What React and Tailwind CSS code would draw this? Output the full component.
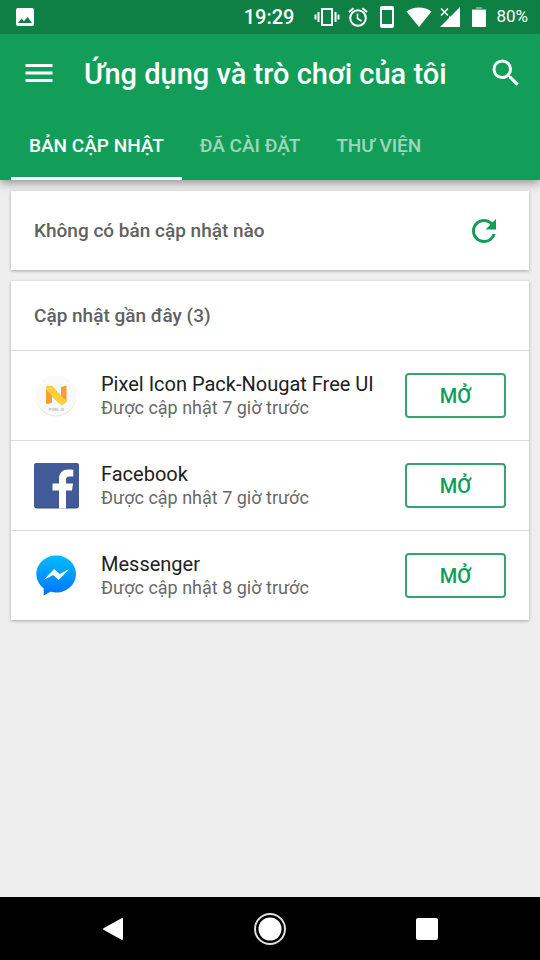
import React, { useState } from 'react';
import { MdMenu, MdSearch, MdRefresh } from 'react-icons/md';

const tabs = ['BẢN CẬP NHẬT', 'ĐÃ CÀI ĐẶT', 'THƯ VIỆN'];

const apps = [
  { name: 'Pixel Icon Pack-Nougat Free UI', updated: 'Được cập nhật 7 giờ trước', Icon: PixelIcon },
  { name: 'Facebook', updated: 'Được cập nhật 7 giờ trước', Icon: FacebookIcon },
  { name: 'Messenger', updated: 'Được cập nhật 8 giờ trước', Icon: MessengerIcon },
];

function PixelIcon() {
  return (
    <svg viewBox="0 0 46 46" className="size-[46px] shrink-0" aria-hidden="true">
      <circle cx="22" cy="23.3" r="20" fill="#d4d4d4" />
      <circle cx="22" cy="22.5" r="20.2" fill="#f9f9f9" />
      <path d="M12 13.500L18 13V30L12 31Z" fill="#f3a033" />
      <path d="M27 14L32.500 12.500V29L27 31Z" fill="#f3a033" />
      <path d="M12 13.500L18 12.500L32.500 28.500L28.500 32.500L12 16.500Z" fill="#fcd03a" />
      <path d="M12 16.500L28.500 32.500L24.500 30L18 23.500Z" fill="#f8bf34" />
      <text x="22.500" y="38" textAnchor="middle" fontFamily="Roboto, sans-serif" fontSize="4" fill="#9a9a9a">PIXEL UI</text>
    </svg>
  );
}

function FacebookIcon() {
  return (
    <svg viewBox="0 0 46 46" className="size-[46px] shrink-0" aria-hidden="true">
      <rect x="0" y="0" width="45" height="45.500" rx="3" fill="#324b81" />
      <rect x="0" y="0" width="45" height="44.500" rx="3" fill="#415b99" />
      <path d="M25 45.500V27.500H18.500V20.500H25V16C25 9.700 28.700 6.500 34.500 6.500C36.800 6.500 38.500 6.600 39.300 6.700V13.500H35.500C32.700 13.500 32 15 32 17V20.500H39L38 27.500H32V45.500Z" fill="#fff" />
    </svg>
  );
}

function MessengerIcon() {
  return (
    <svg viewBox="0 0 46 46" className="size-[46px] shrink-0" aria-hidden="true">
      <defs>
        <linearGradient id="messenger" x1="0" y1="0" x2="0" y2="1">
          <stop offset="0" stopColor="#00bdff" />
          <stop offset="1" stopColor="#0072ff" />
        </linearGradient>
      </defs>
      <path d="M22.200 2.500C11.200 2.500 2.400 10.700 2.400 21C2.400 26.800 5.200 31.900 9.700 35.300V42.500L16.700 38.700C18.500 39.200 20.300 39.500 22.200 39.500C33.200 39.500 42 31.300 42 21S33.200 2.500 22.200 2.500Z" fill="url(#messenger)" />
      <path d="M9.700 27L20.200 16L25.700 21L35.200 16L24.700 27L19.200 22Z" fill="#fff" />
    </svg>
  );
}

function StatusBar() {
  return (
    <div className="flex h-[34px] items-center bg-[#0f8044] pr-3 pl-4 text-white">
      <svg viewBox="0 0 18 18" className="size-[18px]" fill="currentColor" aria-label="Ảnh">
        <path fillRule="evenodd" d="M2 0H16Q18 0 18 2V16Q18 18 16 18H2Q0 18 0 16V2Q0 0 2 0ZM2 15H16L11.500 9L8 13.200L5.500 10.500Z" />
      </svg>
      <span className="ml-auto text-xl font-medium">19:29</span>
      <svg viewBox="0 0 26 20" className="ml-5 h-5 w-[26px]" fill="none" stroke="currentColor" strokeWidth="2" aria-label="Rung">
        <rect x="8" y="2" width="10" height="16" />
        <path d="M4.500 5V15M1.500 7.500V12.500M21.500 5V15M24.500 7.500V12.500" />
      </svg>
      <svg viewBox="0 0 20 20" className="ml-2 size-5" fill="none" stroke="currentColor" strokeWidth="2" aria-label="Báo thức">
        <circle cx="10" cy="11" r="7.800" />
        <path d="M1 5L5.500 1.200M19 5L14.500 1.200" />
        <path d="M9.500 6.500V11.500L13.500 14" strokeWidth="1.600" />
      </svg>
      <svg viewBox="0 0 14 22" className="ml-3 h-[22px] w-3.5" fill="currentColor" aria-label="Thiết bị">
        <path fillRule="evenodd" d="M2 0H12Q14 0 14 2V20Q14 22 12 22H2Q0 22 0 20V2Q0 0 2 0ZM2 4V18H12V4Z" />
      </svg>
      <svg viewBox="0 0 26 20" className="ml-3 h-5 w-[26px]" fill="currentColor" aria-label="Wi-Fi">
        <path d="M0.500 4.500C4 1.800 8.500 0.500 13 0.500S22 1.800 25.500 4.500L13 20Z" />
      </svg>
      <svg viewBox="0 0 20 20" className="ml-2 size-5" fill="currentColor" aria-label="Không có sóng">
        <path d="M20 0V20H0L9 11V9.500H10.500Z" />
        <path d="M1 1.500L8 8.500M8 1.500L1 8.500" stroke="currentColor" strokeWidth="1.400" />
      </svg>
      <svg viewBox="0 0 14 20" className="ml-3 h-5 w-3.5" fill="currentColor" aria-label="Pin">
        <path d="M4 0H10V2H14V4H0V2H4Z" opacity="0.4" />
        <path d="M0 3H14V19Q14 20 13 20H1Q0 20 0 19Z" />
      </svg>
      <span className="ml-2.5 text-[17px]">80%</span>
    </div>
  );
}

function AppRow({ app }) {
  const { Icon } = app;
  return (
    <li className="flex h-[90px] items-center border-t border-[#dcdcdc] px-[23px]">
      <Icon />
      <div className="ml-[21px] min-w-0 flex-1">
        <p className="truncate text-xl leading-6 text-[#212121]">{app.name}</p>
        <p className="truncate text-lg leading-6 text-[#696969]">{app.updated}</p>
      </div>
      <button className="h-[45px] w-[101px] rounded border-2 border-[#35a56c] text-xl font-medium text-[#0f9d58]">
        MỞ
      </button>
    </li>
  );
}

export default function App() {
  const [active, setActive] = useState(0);

  return (
    <div className="flex min-h-screen flex-col bg-[#eeeeee] font-['Roboto',sans-serif]">
      <header className="bg-[#129e59] text-white shadow-[0_2px_10px_rgba(0,0,0,0.45)]">
        <StatusBar />
        <div className="flex h-[78px] items-center pr-4 pl-[21px]">
          <button aria-label="Menu">
            <MdMenu className="size-9" />
          </button>
          <h1 className="ml-[27px] flex-1 truncate pt-0.5 text-[29px] leading-10 font-medium">Ứng dụng và trò chơi của tôi</h1>
          <button aria-label="Tìm kiếm">
            <MdSearch className="size-9" />
          </button>
        </div>
        <nav className="flex h-[68px] pl-[11px]">
          {tabs.map((tab, i) => (
            <button
              key={tab}
              onClick={() => setActive(i)}
              className={`border-y-3 border-t-transparent px-[18px] text-[19px] font-medium ${
                i === active ? 'border-b-white text-white' : 'border-b-transparent text-white/60'
              }`}
            >
              {tab}
            </button>
          ))}
        </nav>
      </header>

      <main className="flex flex-1 flex-col gap-[11px] p-[11px]">
        <section className="flex h-[79px] items-center justify-between bg-white pr-[27px] pl-[23px] shadow-[0_1px_3px_rgba(0,0,0,0.3)]">
          <h2 className="text-[19px] leading-8 font-medium text-[#616161]">Không có bản cập nhật nào</h2>
          <button aria-label="Làm mới" className="text-[#129e59]">
            <MdRefresh className="size-9" />
          </button>
        </section>

        <section className="bg-white shadow-[0_1px_3px_rgba(0,0,0,0.3)]">
          <h2 className="flex h-[69px] items-center px-[23px] text-[19px] leading-8 font-medium text-[#616161]">Cập nhật gần đây (3)</h2>
          <ul>
            {apps.map((app) => (
              <AppRow key={app.name} app={app} />
            ))}
          </ul>
        </section>
      </main>

      <footer className="flex h-[63px] items-center bg-black px-[34px] text-white">
        <button aria-label="Quay lại" className="flex flex-1 justify-center">
          <svg viewBox="0 0 22 24" className="h-6 w-[22px]" fill="currentColor" stroke="currentColor" strokeWidth="2" strokeLinejoin="round">
            <path d="M20 2V22L2 12Z" />
          </svg>
        </button>
        <button aria-label="Trang chủ" className="flex flex-1 justify-center">
          <svg viewBox="0 0 34 34" className="size-[34px]">
            <circle cx="17" cy="17" r="15" fill="none" stroke="#e0e0e0" strokeWidth="2" />
            <circle cx="17" cy="17" r="11.500" fill="currentColor" />
          </svg>
        </button>
        <button aria-label="Gần đây" className="flex flex-1 justify-center">
          <span className="size-[22px] rounded-xs bg-white" />
        </button>
      </footer>
    </div>
  );
}
